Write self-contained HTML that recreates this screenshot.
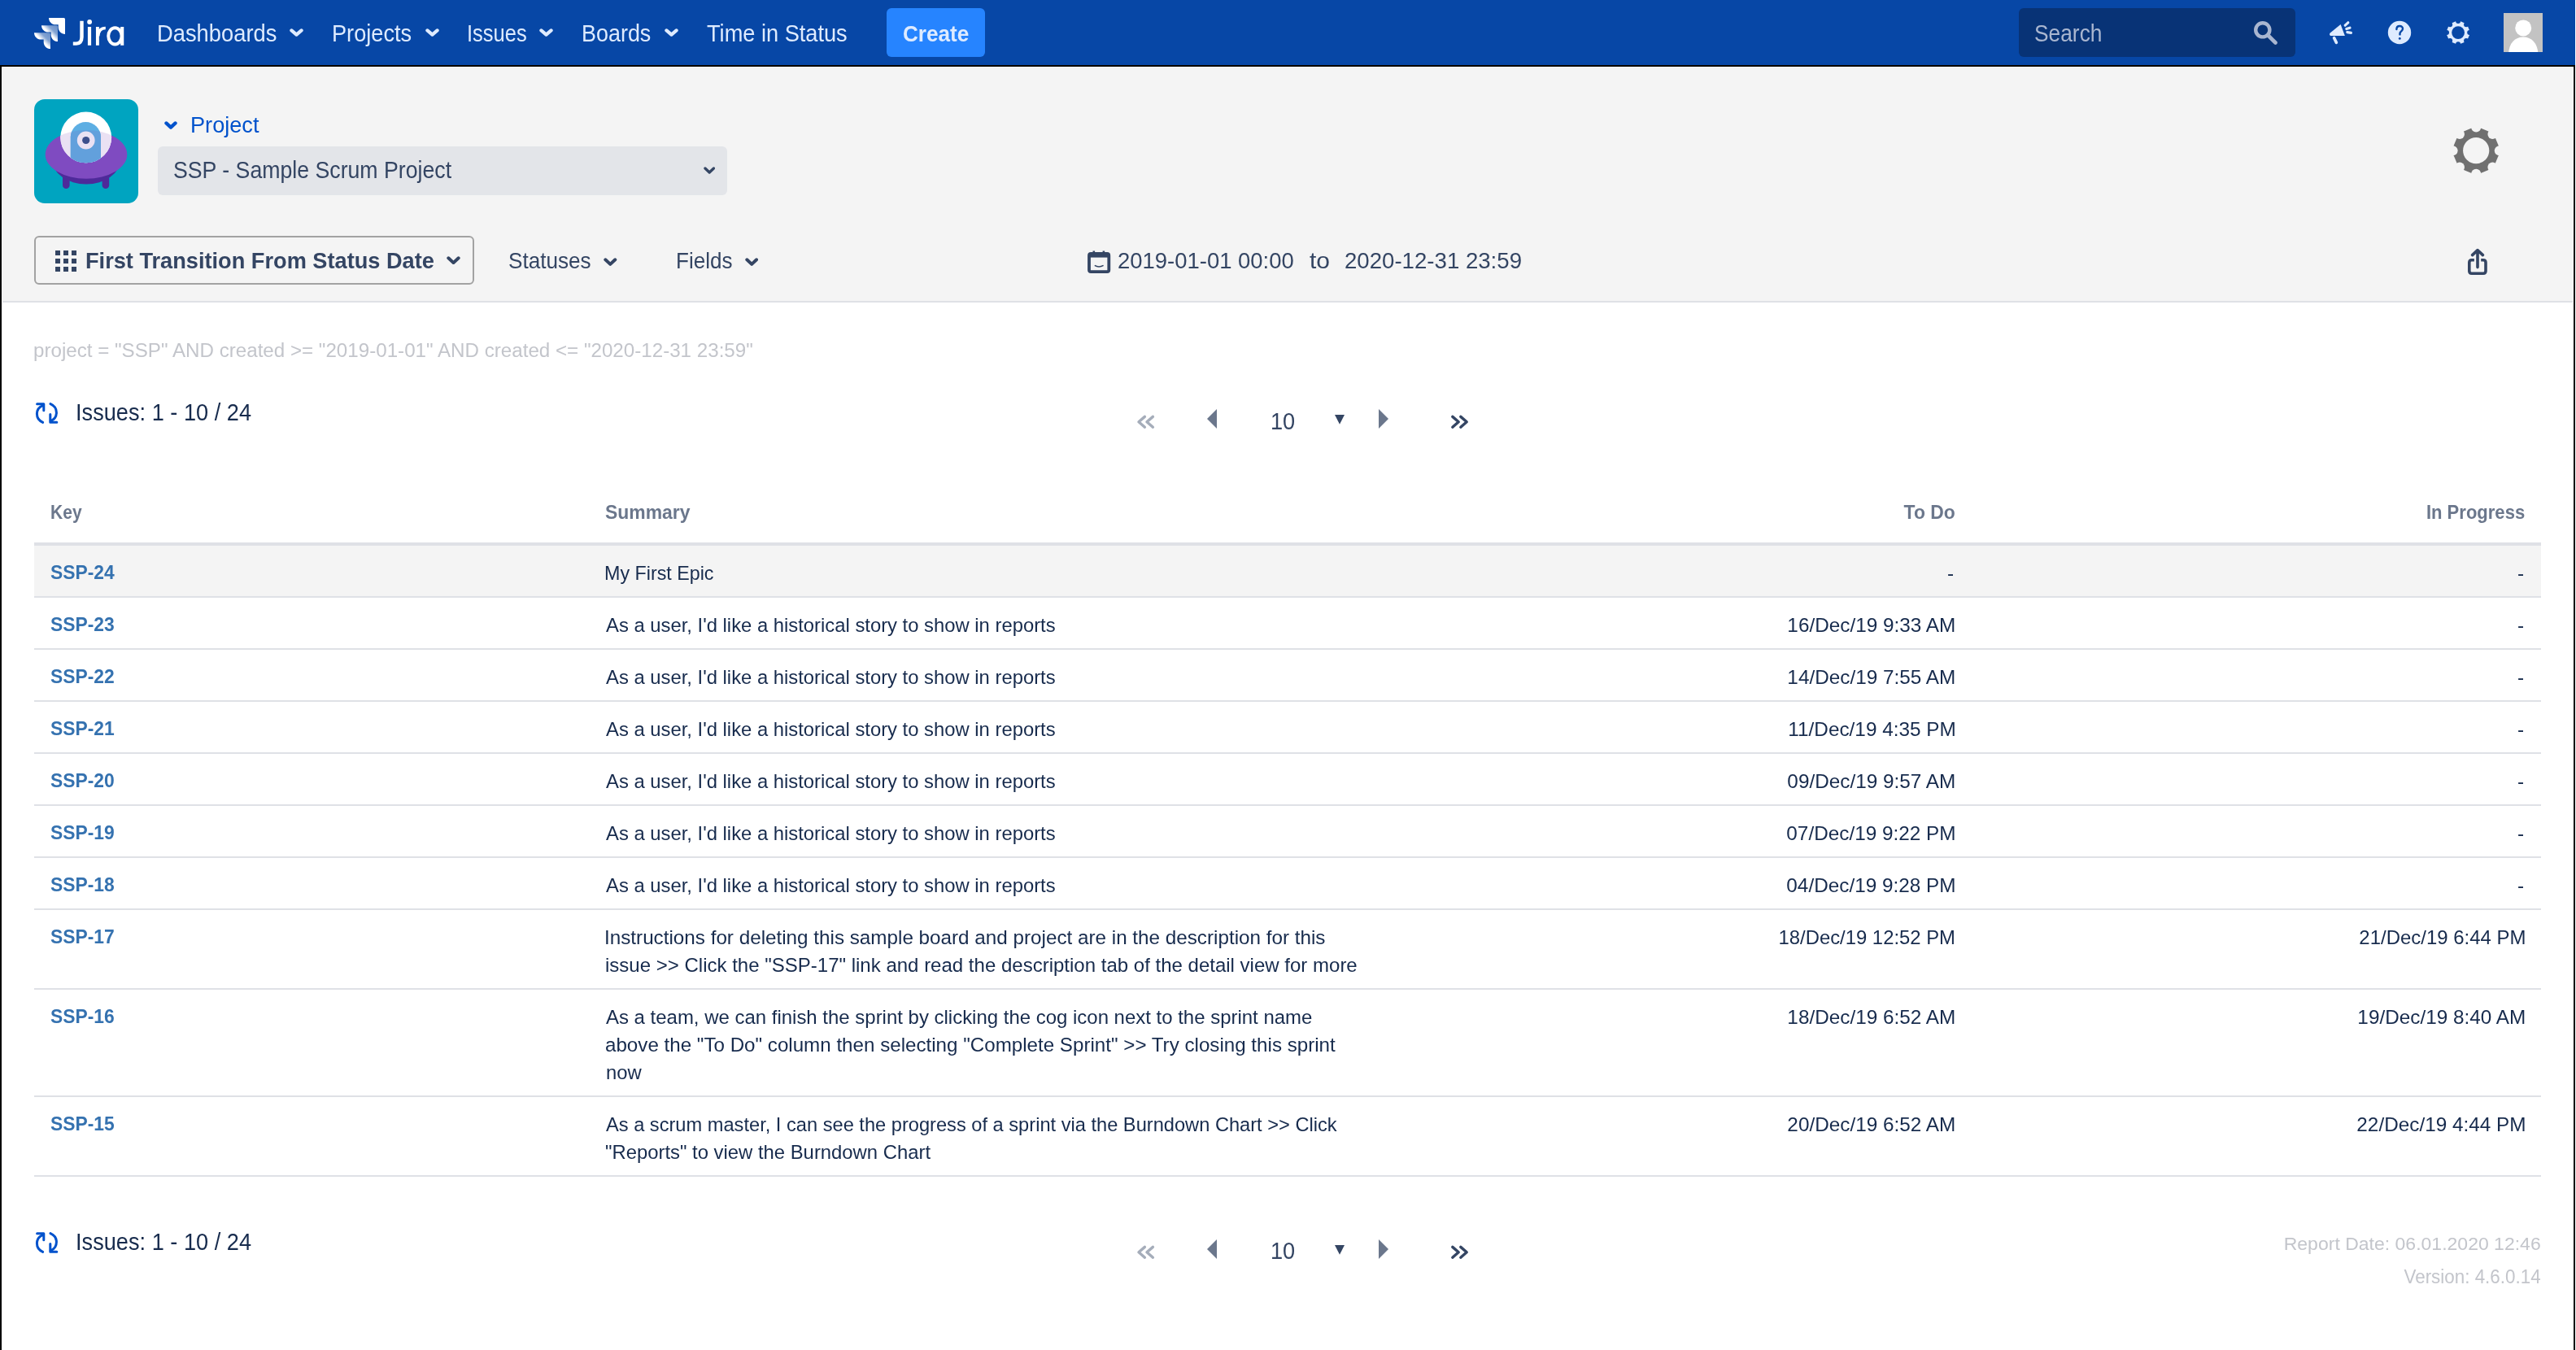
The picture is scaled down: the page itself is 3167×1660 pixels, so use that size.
<!DOCTYPE html>
<html><head><meta charset="utf-8"><title>Time in Status</title>
<style>
html,body{margin:0;padding:0;}
body{width:3167px;height:1660px;position:relative;overflow:hidden;background:#fff;font-family:"Liberation Sans", sans-serif;}
.t{position:absolute;white-space:pre;line-height:1;}
.a{position:absolute;display:block;}
.r{position:absolute;}
</style></head><body>
<div class="r" style="left:0;top:0;width:3166px;height:80px;background:#0747A6"></div><div class="r" style="left:0;top:80px;width:3166px;height:2px;background:#000"></div><div class="r" style="left:3px;top:83px;width:3160px;height:287px;background:#F4F4F4"></div><div class="r" style="left:3px;top:370px;width:3160px;height:2px;background:#DFE1E6"></div><div class="r" style="left:0;top:80px;width:2px;height:1580px;background:#000"></div><div class="r" style="left:3164px;top:80px;width:2px;height:1580px;background:#000"></div><svg class="a" style="left:41px;top:21px" width="40" height="40" viewBox="0 0 40 40">
<defs>
<linearGradient id="g1" x1="1" y1="0" x2="0" y2="1"><stop offset="0" stop-color="#fff" stop-opacity="0.38"/><stop offset="0.3" stop-color="#fff" stop-opacity="0.5"/><stop offset="0.5" stop-color="#fff"/><stop offset="1" stop-color="#fff"/></linearGradient>
</defs>
<path d="M38.6 1 H20.4 c0 4.6 3.7 8.3 8.3 8.3 h3.4 v3.3 c0 4.6 3.7 8.3 8.3 8.3 V2.6 c0-.9-.8-1.6-1.6-1.6z" fill="#fff" transform="translate(-1.4,0)"/>
<path d="M29.6 10.2 H11.4 c0 4.6 3.7 8.3 8.3 8.3 h3.4 v3.3 c0 4.6 3.7 8.3 8.3 8.3 V11.8 c0-.9-.8-1.6-1.6-1.6z" fill="url(#g1)" transform="translate(-1.4,0)"/>
<path d="M20.6 19.2 H2.4 c0 4.6 3.7 8.3 8.3 8.3 h3.4 v3.3 c0 4.6 3.7 8.3 8.3 8.3 V20.8 c0-.9-.8-1.6-1.6-1.6z" fill="url(#g1)" transform="translate(-1.4,0)"/>
</svg><svg class="a" style="left:86px;top:20px" width="70" height="40" viewBox="0 0 70 40">
<g fill="none" stroke="#fff">
<path d="M14.5 5.8 V25.8 C14.5 31 11.8 33.6 7.8 33.6 H3.8" stroke-width="4.4"/>
<path d="M24 13 V35.8" stroke-width="4.2"/>
<path d="M33.9 13 V35.8" stroke-width="3.9"/>
<path d="M34.6 24.5 C35 17.8 38.6 14.5 43.8 14.5" stroke-width="3.7"/>
<ellipse cx="55.4" cy="24.35" rx="8.2" ry="10.1" stroke-width="3.9"/>
<path d="M64.2 13 V35.8" stroke-width="4.1"/>
</g>
<circle cx="24.1" cy="7" r="2.9" fill="#fff"/>
</svg><div class="t" style="top:26.60px;font-size:29.0px;color:#DEEBFF;left:193.05px;transform-origin:0 0;transform:scaleX(0.9427);">Dashboards</div><svg class="a" style="left:356.4px;top:35px" width="17" height="10" viewBox="0 0 17 10"><path d="M2.4 2.4 L8.5 7.6000000000000005 L14.6 2.4" fill="none" stroke="#DEEBFF" stroke-width="4.2" stroke-linecap="round" stroke-linejoin="round"/></svg><div class="t" style="top:26.60px;font-size:29.0px;color:#DEEBFF;left:407.96px;transform-origin:0 0;transform:scaleX(0.9369);">Projects</div><svg class="a" style="left:522.6px;top:35px" width="17" height="10" viewBox="0 0 17 10"><path d="M2.4 2.4 L8.5 7.6000000000000005 L14.6 2.4" fill="none" stroke="#DEEBFF" stroke-width="4.2" stroke-linecap="round" stroke-linejoin="round"/></svg><div class="t" style="top:26.60px;font-size:29.0px;color:#DEEBFF;left:574.09px;transform-origin:0 0;transform:scaleX(0.8798);">Issues</div><svg class="a" style="left:663.4px;top:35px" width="17" height="10" viewBox="0 0 17 10"><path d="M2.4 2.4 L8.5 7.6000000000000005 L14.6 2.4" fill="none" stroke="#DEEBFF" stroke-width="4.2" stroke-linecap="round" stroke-linejoin="round"/></svg><div class="t" style="top:26.60px;font-size:29.0px;color:#DEEBFF;left:714.98px;transform-origin:0 0;transform:scaleX(0.9285);">Boards</div><svg class="a" style="left:816.6px;top:35px" width="17" height="10" viewBox="0 0 17 10"><path d="M2.4 2.4 L8.5 7.6000000000000005 L14.6 2.4" fill="none" stroke="#DEEBFF" stroke-width="4.2" stroke-linecap="round" stroke-linejoin="round"/></svg><div class="t" style="top:26.60px;font-size:29.0px;color:#DEEBFF;left:868.92px;transform-origin:0 0;transform:scaleX(0.9371);">Time in Status</div><div class="r" style="left:1090px;top:10px;width:121px;height:60px;background:#2684FF;border-radius:6px"></div><div class="t" style="top:27.53px;font-size:28.143px;color:#DEEBFF;font-weight:700;left:1110.05px;transform-origin:0 0;transform:scaleX(0.9279);">Create</div><div class="r" style="left:2482px;top:10px;width:340px;height:60px;background:#083376;border-radius:6px"></div><div class="t" style="top:27.00px;font-size:29.0px;color:#A9B6D0;left:2501.18px;transform-origin:0 0;transform:scaleX(0.9083);">Search</div><svg class="a" style="left:2770px;top:25px" width="32" height="32" viewBox="0 0 32 32"><circle cx="11.8" cy="11.8" r="8.6" fill="none" stroke="#A9B6D0" stroke-width="4.4"/><path d="M18.5 18.5 L27.5 27.5" stroke="#A9B6D0" stroke-width="4.6" stroke-linecap="round"/></svg><svg class="a" style="left:2860px;top:24px" width="36" height="34" viewBox="2860 24 36 34">
<path d="M2864.8 40.6 L2877.6 29.9 L2882.9 44 L2865.2 44.1 Q2863 42.4 2864.8 40.6z" fill="#DEEBFF"/>
<path d="M2869.6 46.6 L2872.4 52.4" stroke="#DEEBFF" stroke-width="3.6" stroke-linecap="round"/>
<g stroke="#DEEBFF" stroke-width="3.2" stroke-linecap="round">
<path d="M2883.2 31.2 L2886.8 27.8"/><path d="M2884.8 35.6 L2889 34.2"/><path d="M2885.8 39.6 L2890.4 40.4"/></g>
</svg><svg class="a" style="left:2934px;top:24px" width="32" height="32" viewBox="2934 24 32 32">
<circle cx="2950" cy="40.05" r="14.2" fill="#DEEBFF"/>
<path d="M2946.4 36 c0-2.5 1.7-4 3.8-4 c2.2 0 3.8 1.5 3.8 3.5 c0 2.6-3.5 3-3.5 5.6 v1.3" fill="none" stroke="#0747A6" stroke-width="2.4" stroke-linecap="round"/>
<circle cx="2950.3" cy="47.4" r="1.45" fill="#0747A6"/>
</svg><svg class="a" style="left:3005.9px;top:23.9px" width="32.2" height="32.2" viewBox="3005.9 23.9 32.2 32.2"><defs><mask id="mg1" maskUnits="userSpaceOnUse" x="3005.9" y="23.9" width="32.2" height="32.2"><rect x="3005.9" y="23.9" width="32.2" height="32.2" fill="#000"/><polygon points="3025.05,26.23 3029.58,28.11 3033.89,32.42 3035.77,36.95 3035.77,43.05 3033.89,47.58 3029.58,51.89 3025.05,53.77 3018.95,53.77 3014.42,51.89 3010.11,47.58 3008.23,43.05 3008.23,36.95 3010.11,32.42 3014.42,28.11 3018.95,26.23" fill="#fff"/><circle cx="3022.00" cy="25.90" r="3.0" fill="#000"/><circle cx="3031.97" cy="30.03" r="3.0" fill="#000"/><circle cx="3036.10" cy="40.00" r="3.0" fill="#000"/><circle cx="3031.97" cy="49.97" r="3.0" fill="#000"/><circle cx="3022.00" cy="54.10" r="3.0" fill="#000"/><circle cx="3012.03" cy="49.97" r="3.0" fill="#000"/><circle cx="3007.90" cy="40.00" r="3.0" fill="#000"/><circle cx="3012.03" cy="30.03" r="3.0" fill="#000"/><circle cx="3022" cy="40" r="7.9" fill="#000"/></mask></defs><rect x="3005.9" y="23.9" width="32.2" height="32.2" fill="#DEEBFF" mask="url(#mg1)"/></svg><svg class="a" style="left:3078px;top:16px" width="48" height="48" viewBox="0 0 48 48"><defs><filter id="avb" x="-0.2" y="-0.2" width="1.4" height="1.4"><feGaussianBlur stdDeviation="0.7"/></filter><clipPath id="avc"><rect width="48" height="48"/></clipPath></defs><rect width="48" height="48" fill="#C3C3C3"/><g clip-path="url(#avc)"><g filter="url(#avb)"><circle cx="24.2" cy="18.4" r="10" fill="#fff"/><path d="M6 50 C6.6 37 13.9 29.4 24.2 29.4 C34.4 29.4 41.8 37 42.4 50z" fill="#fff"/></g></g></svg><svg class="a" style="left:42px;top:122px" width="128" height="128" viewBox="0 0 128 128">
<rect width="128" height="128" rx="13" fill="#00A4C0"/>
<ellipse cx="64" cy="74" rx="42" ry="30.5" fill="#4E2A9A"/>
<rect x="35" y="88" width="8.6" height="22" rx="4.3" fill="#4E2A9A"/>
<rect x="83.6" y="88" width="8.6" height="22" rx="4.3" fill="#4E2A9A"/>
<ellipse cx="64" cy="67.9" rx="50.3" ry="29.9" fill="#7F4BC1"/>
<defs><clipPath id="dome"><circle cx="63.7" cy="46.9" r="31.4"/></clipPath></defs>
<g clip-path="url(#dome)">
<rect x="0" y="0" width="128" height="128" fill="#fff"/>
<ellipse cx="64" cy="67.9" rx="50.3" ry="29.9" fill="#EAE1F3"/>
<path d="M44.8 46.6 A18.6 18.6 0 0 1 82 46.6 V90 H44.8z" fill="#5DAEE3"/>
<path d="M44.8 90 V46.6 A18.6 18.6 0 0 1 82 46.6 V90z" fill="#62A0DC" clip-path="url(#lowerE)"/>
</g>
<defs><clipPath id="lowerE"><ellipse cx="64" cy="67.9" rx="50.3" ry="29.9"/></clipPath></defs>
<circle cx="63.7" cy="50.5" r="10.9" fill="#EAE1F3"/>
<circle cx="63.7" cy="50.5" r="4.6" fill="#3D4F8D"/>
</svg><svg class="a" style="left:202px;top:149px" width="16" height="10" viewBox="0 0 16 10"><path d="M2.4 2.4 L8.0 7.6000000000000005 L13.6 2.4" fill="none" stroke="#0052CC" stroke-width="4.2" stroke-linecap="round" stroke-linejoin="round"/></svg><div class="t" style="top:139.53px;font-size:28.143px;color:#0052CC;left:234.16px;transform-origin:0 0;transform:scaleX(0.9646);">Project</div><div class="r" style="left:194px;top:180px;width:700px;height:60px;background:#E3E5E9;border-radius:6px"></div><div class="t" style="top:194.71px;font-size:28.571px;color:#344563;left:212.67px;transform-origin:0 0;transform:scaleX(0.9342);">SSP - Sample Scrum Project</div><svg class="a" style="left:865px;top:205.3px" width="14.4" height="9" viewBox="0 0 14.4 9"><path d="M1.95 1.95 L7.2 7.05 L12.45 1.95" fill="none" stroke="#344563" stroke-width="3.3" stroke-linecap="round" stroke-linejoin="round"/></svg><svg class="a" style="left:3013.8px;top:154.8px" width="60.4" height="60.4" viewBox="3013.8 154.8 60.4 60.4"><defs><mask id="mg2" maskUnits="userSpaceOnUse" x="3013.8" y="154.8" width="60.4" height="60.4"><rect x="3013.8" y="154.8" width="60.4" height="60.4" fill="#000"/><polygon points="3050.10,157.47 3059.15,161.22 3067.78,169.85 3071.53,178.90 3071.53,191.10 3067.78,200.15 3059.15,208.78 3050.10,212.53 3037.90,212.53 3028.85,208.78 3020.22,200.15 3016.47,191.10 3016.47,178.90 3020.22,169.85 3028.85,161.22 3037.90,157.47" fill="#fff"/><circle cx="3044.00" cy="156.40" r="6.0" fill="#000"/><circle cx="3064.22" cy="164.78" r="6.0" fill="#000"/><circle cx="3072.60" cy="185.00" r="6.0" fill="#000"/><circle cx="3064.22" cy="205.22" r="6.0" fill="#000"/><circle cx="3044.00" cy="213.60" r="6.0" fill="#000"/><circle cx="3023.78" cy="205.22" r="6.0" fill="#000"/><circle cx="3015.40" cy="185.00" r="6.0" fill="#000"/><circle cx="3023.78" cy="164.78" r="6.0" fill="#000"/><circle cx="3044" cy="185" r="16.1" fill="#000"/></mask></defs><rect x="3013.8" y="154.8" width="60.4" height="60.4" fill="#707070" mask="url(#mg2)"/></svg><div class="r" style="left:42px;top:290px;width:537px;height:56px;border:2px solid #A2A2A2;border-radius:6px"></div><svg class="a" style="left:0;top:0" width="100" height="340" viewBox="0 0 100 340"><g fill="#344563"><rect x="68" y="308" width="6" height="6"/><rect x="68" y="318" width="6" height="6"/><rect x="68" y="328" width="6" height="6"/><rect x="78" y="308" width="6" height="6"/><rect x="78" y="318" width="6" height="6"/><rect x="78" y="328" width="6" height="6"/><rect x="88" y="308" width="6" height="6"/><rect x="88" y="318" width="6" height="6"/><rect x="88" y="328" width="6" height="6"/></g></svg><div class="t" style="top:306.16px;font-size:28.286px;color:#344563;font-weight:700;left:104.64px;transform-origin:0 0;transform:scaleX(0.9615);">First Transition From Status Date</div><svg class="a" style="left:549px;top:315px" width="17" height="10.4" viewBox="0 0 17 10.4"><path d="M2.3 2.3 L8.5 8.1 L14.7 2.3" fill="none" stroke="#344563" stroke-width="4" stroke-linecap="round" stroke-linejoin="round"/></svg><div class="t" style="top:306.16px;font-size:28.286px;color:#344563;left:624.69px;transform-origin:0 0;transform:scaleX(0.9243);">Statuses</div><svg class="a" style="left:742.2px;top:317px" width="16.6" height="10.2" viewBox="0 0 16.6 10.2"><path d="M2.3 2.3 L8.3 7.8999999999999995 L14.3 2.3" fill="none" stroke="#344563" stroke-width="4" stroke-linecap="round" stroke-linejoin="round"/></svg><div class="t" style="top:306.16px;font-size:28.286px;color:#344563;left:830.85px;transform-origin:0 0;transform:scaleX(0.9213);">Fields</div><svg class="a" style="left:916px;top:317px" width="16.4" height="10.2" viewBox="0 0 16.4 10.2"><path d="M2.3 2.3 L8.2 7.8999999999999995 L14.099999999999998 2.3" fill="none" stroke="#344563" stroke-width="4" stroke-linecap="round" stroke-linejoin="round"/></svg><svg class="a" style="left:1334px;top:305px" width="34" height="34" viewBox="1334 305 34 34">
<rect x="1339" y="312" width="24.3" height="22.2" rx="2.2" fill="none" stroke="#344563" stroke-width="3.8"/>
<rect x="1338" y="311" width="26" height="5.6" fill="#344563"/>
<path d="M1343.5 308.6 h2.6 v3 h-2.6z M1355.6 308.6 h2.6 v3 h-2.6z" fill="#344563"/>
<path d="M1345.8 326.4 Q1351 329.6 1356.6 326.4" fill="none" stroke="#344563" stroke-width="1.6"/>
</svg><div class="t" style="top:306.16px;font-size:28.286px;color:#344563;left:1374.33px;transform-origin:0 0;transform:scaleX(0.9714);">2019-01-01 00:00</div><div class="t" style="top:306.16px;font-size:28.286px;color:#344563;left:1610.00px;transform-origin:0 0;transform:scaleX(1.0606);">to</div><div class="t" style="top:306.16px;font-size:28.286px;color:#344563;left:1652.62px;transform-origin:0 0;transform:scaleX(0.9768);">2020-12-31 23:59</div><svg class="a" style="left:3030px;top:302px" width="32" height="40" viewBox="3030 302 32 40">
<path d="M3041.9 319.8 H3038.8 Q3035.8 319.8 3035.8 322.8 V333.2 Q3035.8 336.2 3038.8 336.2 H3053 Q3056 336.2 3056 333.2 V322.8 Q3056 319.8 3053 319.8 H3050.2" fill="none" stroke="#344563" stroke-width="3.6" stroke-linecap="butt"/>
<path d="M3046 328.6 V308.2 M3039.6 313.6 L3046 307.6 L3052.4 313.6" fill="none" stroke="#344563" stroke-width="3.6" stroke-linecap="round" stroke-linejoin="round"/>
</svg><div class="t" style="top:420.21px;font-size:23.571px;color:#C3C5CB;left:41.49px;transform-origin:0 0;transform:scaleX(1.0253);">project = &quot;SSP&quot; AND created &gt;= &quot;2019-01-01&quot; AND created &lt;= &quot;2020-12-31 23:59&quot;</div><svg class="a" style="left:35px;top:485.6px" width="40" height="40" viewBox="0 0 40 40">
<g fill="none" stroke="#0052CC" stroke-width="3" stroke-linecap="round" stroke-linejoin="round">
<path d="M17.6 12.6 C13.2 14.4 10.4 18.2 10.4 22.8 C10.4 27.4 13 31.4 17.6 33.4"/>
<path d="M10.6 10.8 H18.8 V18.8"/>
<path d="M27 10.6 C31.6 12.6 34.4 16.6 34.4 21.2 C34.4 25.8 31.8 29.8 27.4 31.6"/>
<path d="M26.8 23.6 V33.2 H34.8" />
</g></svg><div class="t" style="top:492.54px;font-size:28.714px;color:#172B4D;left:92.96px;transform-origin:0 0;transform:scaleX(0.9467);">Issues: 1 - 10 / 24</div><svg class="a" style="left:1380px;top:490px" width="440" height="50" viewBox="1380 490 440 50">
<g fill="none" stroke="#A5ADBA" stroke-width="3.4" stroke-linecap="round" stroke-linejoin="round"><path d="M1407.4 512.4 L1400 518.8 L1407.4 525.2 M1417.4 512.4 L1410 518.8 L1417.4 525.2"/></g>
<path d="M1496 503 V527 L1484 515z" fill="#6B778C"/>
<path d="M1641 510 H1653 L1647 521.8z" fill="#344563"/>
<path d="M1695 503 V527 L1707 515z" fill="#6B778C"/>
<g fill="none" stroke="#344563" stroke-width="3.4" stroke-linecap="round" stroke-linejoin="round"><path d="M1785.8 512.4 L1793.2 518.8 L1785.8 525.2 M1795.8 512.4 L1803.2 518.8 L1795.8 525.2"/></g>
</svg><div class="t" style="top:503.54px;font-size:28.714px;color:#344563;left:1561.76px;transform-origin:0 0;transform:scaleX(0.9473);">10</div><div class="t" style="top:617.61px;font-size:24.571px;color:#6B778C;font-weight:700;left:62.05px;transform-origin:0 0;transform:scaleX(0.8569);">Key</div><div class="t" style="top:617.61px;font-size:24.571px;color:#6B778C;font-weight:700;left:743.63px;transform-origin:0 0;transform:scaleX(0.9336);">Summary</div><div class="t" style="top:617.61px;font-size:24.571px;color:#6B778C;font-weight:700;right:763.53px;text-align:right;transform-origin:100% 0;transform:scaleX(0.9319);">To Do</div><div class="t" style="top:617.61px;font-size:24.571px;color:#6B778C;font-weight:700;right:63.01px;text-align:right;transform-origin:100% 0;transform:scaleX(0.8972);">In Progress</div><div class="r" style="left:42px;top:667px;width:3082px;height:4px;background:#DFE1E6"></div><div class="r" style="left:42px;top:671px;width:3082px;height:62px;background:#F4F4F4"></div><div class="r" style="left:42px;top:733px;width:3082px;height:2px;background:#DFE1E6"></div><div class="t" style="top:692.01px;font-size:24.571px;color:#3572B0;font-weight:700;left:61.93px;transform-origin:0 0;transform:scaleX(0.9292);">SSP-24</div><div class="t" style="top:692.53px;font-size:24.143px;color:#172B4D;left:743.35px;transform-origin:0 0;transform:scaleX(0.9649);">My First Epic</div><div class="t" style="top:693.33px;font-size:24.143px;color:#172B4D;right:764.84px;text-align:right;transform-origin:100% 0;transform:scaleX(1.008);">-</div><div class="t" style="top:693.33px;font-size:24.143px;color:#172B4D;right:64.04px;text-align:right;transform-origin:100% 0;transform:scaleX(1.008);">-</div><div class="r" style="left:42px;top:797px;width:3082px;height:2px;background:#DFE1E6"></div><div class="t" style="top:756.01px;font-size:24.571px;color:#3572B0;font-weight:700;left:61.93px;transform-origin:0 0;transform:scaleX(0.9292);">SSP-23</div><div class="t" style="top:756.53px;font-size:24.143px;color:#172B4D;left:745.00px;transform-origin:0 0;transform:scaleX(0.9873);">As a user, I&#x27;d like a historical story to show in reports</div><div class="t" style="top:756.53px;font-size:24.143px;color:#172B4D;right:762.44px;text-align:right;transform-origin:100% 0;transform:scaleX(1.008);">16/Dec/19 9:33 AM</div><div class="t" style="top:757.33px;font-size:24.143px;color:#172B4D;right:64.04px;text-align:right;transform-origin:100% 0;transform:scaleX(1.008);">-</div><div class="r" style="left:42px;top:861px;width:3082px;height:2px;background:#DFE1E6"></div><div class="t" style="top:820.01px;font-size:24.571px;color:#3572B0;font-weight:700;left:61.93px;transform-origin:0 0;transform:scaleX(0.9292);">SSP-22</div><div class="t" style="top:820.53px;font-size:24.143px;color:#172B4D;left:745.00px;transform-origin:0 0;transform:scaleX(0.9873);">As a user, I&#x27;d like a historical story to show in reports</div><div class="t" style="top:820.53px;font-size:24.143px;color:#172B4D;right:762.44px;text-align:right;transform-origin:100% 0;transform:scaleX(1.008);">14/Dec/19 7:55 AM</div><div class="t" style="top:821.33px;font-size:24.143px;color:#172B4D;right:64.04px;text-align:right;transform-origin:100% 0;transform:scaleX(1.008);">-</div><div class="r" style="left:42px;top:925px;width:3082px;height:2px;background:#DFE1E6"></div><div class="t" style="top:884.01px;font-size:24.571px;color:#3572B0;font-weight:700;left:61.93px;transform-origin:0 0;transform:scaleX(0.9292);">SSP-21</div><div class="t" style="top:884.53px;font-size:24.143px;color:#172B4D;left:745.00px;transform-origin:0 0;transform:scaleX(0.9873);">As a user, I&#x27;d like a historical story to show in reports</div><div class="t" style="top:884.53px;font-size:24.143px;color:#172B4D;right:762.44px;text-align:right;transform-origin:100% 0;transform:scaleX(1.008);">11/Dec/19 4:35 PM</div><div class="t" style="top:885.33px;font-size:24.143px;color:#172B4D;right:64.04px;text-align:right;transform-origin:100% 0;transform:scaleX(1.008);">-</div><div class="r" style="left:42px;top:989px;width:3082px;height:2px;background:#DFE1E6"></div><div class="t" style="top:948.01px;font-size:24.571px;color:#3572B0;font-weight:700;left:61.93px;transform-origin:0 0;transform:scaleX(0.9292);">SSP-20</div><div class="t" style="top:948.53px;font-size:24.143px;color:#172B4D;left:745.00px;transform-origin:0 0;transform:scaleX(0.9873);">As a user, I&#x27;d like a historical story to show in reports</div><div class="t" style="top:948.53px;font-size:24.143px;color:#172B4D;right:762.44px;text-align:right;transform-origin:100% 0;transform:scaleX(1.008);">09/Dec/19 9:57 AM</div><div class="t" style="top:949.33px;font-size:24.143px;color:#172B4D;right:64.04px;text-align:right;transform-origin:100% 0;transform:scaleX(1.008);">-</div><div class="r" style="left:42px;top:1053px;width:3082px;height:2px;background:#DFE1E6"></div><div class="t" style="top:1012.01px;font-size:24.571px;color:#3572B0;font-weight:700;left:61.93px;transform-origin:0 0;transform:scaleX(0.9292);">SSP-19</div><div class="t" style="top:1012.53px;font-size:24.143px;color:#172B4D;left:745.00px;transform-origin:0 0;transform:scaleX(0.9873);">As a user, I&#x27;d like a historical story to show in reports</div><div class="t" style="top:1012.53px;font-size:24.143px;color:#172B4D;right:762.44px;text-align:right;transform-origin:100% 0;transform:scaleX(1.008);">07/Dec/19 9:22 PM</div><div class="t" style="top:1013.33px;font-size:24.143px;color:#172B4D;right:64.04px;text-align:right;transform-origin:100% 0;transform:scaleX(1.008);">-</div><div class="r" style="left:42px;top:1117px;width:3082px;height:2px;background:#DFE1E6"></div><div class="t" style="top:1076.01px;font-size:24.571px;color:#3572B0;font-weight:700;left:61.93px;transform-origin:0 0;transform:scaleX(0.9292);">SSP-18</div><div class="t" style="top:1076.53px;font-size:24.143px;color:#172B4D;left:745.00px;transform-origin:0 0;transform:scaleX(0.9873);">As a user, I&#x27;d like a historical story to show in reports</div><div class="t" style="top:1076.53px;font-size:24.143px;color:#172B4D;right:762.44px;text-align:right;transform-origin:100% 0;transform:scaleX(1.008);">04/Dec/19 9:28 PM</div><div class="t" style="top:1077.33px;font-size:24.143px;color:#172B4D;right:64.04px;text-align:right;transform-origin:100% 0;transform:scaleX(1.008);">-</div><div class="r" style="left:42px;top:1215px;width:3082px;height:2px;background:#DFE1E6"></div><div class="t" style="top:1140.01px;font-size:24.571px;color:#3572B0;font-weight:700;left:61.93px;transform-origin:0 0;transform:scaleX(0.9292);">SSP-17</div><div class="t" style="top:1140.53px;font-size:24.143px;color:#172B4D;left:743.18px;transform-origin:0 0;transform:scaleX(1.0046);">Instructions for deleting this sample board and project are in the description for this</div><div class="t" style="top:1174.53px;font-size:24.143px;color:#172B4D;left:743.80px;transform-origin:0 0;transform:scaleX(0.9954);">issue &gt;&gt; Click the &quot;SSP-17&quot; link and read the description tab of the detail view for more</div><div class="t" style="top:1140.53px;font-size:24.143px;color:#172B4D;right:762.81px;text-align:right;transform-origin:100% 0;transform:scaleX(0.9885);">18/Dec/19 12:52 PM</div><div class="t" style="top:1140.53px;font-size:24.143px;color:#172B4D;right:61.55px;text-align:right;transform-origin:100% 0;transform:scaleX(0.9936);">21/Dec/19 6:44 PM</div><div class="r" style="left:42px;top:1347px;width:3082px;height:2px;background:#DFE1E6"></div><div class="t" style="top:1238.01px;font-size:24.571px;color:#3572B0;font-weight:700;left:61.93px;transform-origin:0 0;transform:scaleX(0.9292);">SSP-16</div><div class="t" style="top:1238.53px;font-size:24.143px;color:#172B4D;left:745.00px;transform-origin:0 0;transform:scaleX(0.9932);">As a team, we can finish the sprint by clicking the cog icon next to the sprint name</div><div class="t" style="top:1272.53px;font-size:24.143px;color:#172B4D;left:744.40px;transform-origin:0 0;transform:scaleX(1.0014);">above the &quot;To Do&quot; column then selecting &quot;Complete Sprint&quot; &gt;&gt; Try closing this sprint</div><div class="t" style="top:1306.53px;font-size:24.143px;color:#172B4D;left:745.00px;transform-origin:0 0;transform:scaleX(0.9873);">now</div><div class="t" style="top:1238.53px;font-size:24.143px;color:#172B4D;right:762.44px;text-align:right;transform-origin:100% 0;transform:scaleX(1.008);">18/Dec/19 6:52 AM</div><div class="t" style="top:1238.53px;font-size:24.143px;color:#172B4D;right:61.64px;text-align:right;transform-origin:100% 0;transform:scaleX(1.008);">19/Dec/19 8:40 AM</div><div class="r" style="left:42px;top:1445px;width:3082px;height:2px;background:#DFE1E6"></div><div class="t" style="top:1370.01px;font-size:24.571px;color:#3572B0;font-weight:700;left:61.93px;transform-origin:0 0;transform:scaleX(0.9292);">SSP-15</div><div class="t" style="top:1370.53px;font-size:24.143px;color:#172B4D;left:745.00px;transform-origin:0 0;transform:scaleX(0.9798);">As a scrum master, I can see the progress of a sprint via the Burndown Chart &gt;&gt; Click</div><div class="t" style="top:1404.53px;font-size:24.143px;color:#172B4D;left:744.40px;transform-origin:0 0;transform:scaleX(0.9886);">&quot;Reports&quot; to view the Burndown Chart</div><div class="t" style="top:1370.53px;font-size:24.143px;color:#172B4D;right:762.44px;text-align:right;transform-origin:100% 0;transform:scaleX(1.008);">20/Dec/19 6:52 AM</div><div class="t" style="top:1370.53px;font-size:24.143px;color:#172B4D;right:61.64px;text-align:right;transform-origin:100% 0;transform:scaleX(1.008);">22/Dec/19 4:44 PM</div><svg class="a" style="left:35px;top:1506.4px" width="40" height="40" viewBox="0 0 40 40">
<g fill="none" stroke="#0052CC" stroke-width="3" stroke-linecap="round" stroke-linejoin="round">
<path d="M17.6 12.6 C13.2 14.4 10.4 18.2 10.4 22.8 C10.4 27.4 13 31.4 17.6 33.4"/>
<path d="M10.6 10.8 H18.8 V18.8"/>
<path d="M27 10.6 C31.6 12.6 34.4 16.6 34.4 21.2 C34.4 25.8 31.8 29.8 27.4 31.6"/>
<path d="M26.8 23.6 V33.2 H34.8" />
</g></svg><div class="t" style="top:1513.34px;font-size:28.714px;color:#172B4D;left:92.96px;transform-origin:0 0;transform:scaleX(0.9467);">Issues: 1 - 10 / 24</div><svg class="a" style="left:1380px;top:1510.8px" width="440" height="50" viewBox="1380 490 440 50">
<g fill="none" stroke="#A5ADBA" stroke-width="3.4" stroke-linecap="round" stroke-linejoin="round"><path d="M1407.4 512.4 L1400 518.8 L1407.4 525.2 M1417.4 512.4 L1410 518.8 L1417.4 525.2"/></g>
<path d="M1496 503 V527 L1484 515z" fill="#6B778C"/>
<path d="M1641 510 H1653 L1647 521.8z" fill="#344563"/>
<path d="M1695 503 V527 L1707 515z" fill="#6B778C"/>
<g fill="none" stroke="#344563" stroke-width="3.4" stroke-linecap="round" stroke-linejoin="round"><path d="M1785.8 512.4 L1793.2 518.8 L1785.8 525.2 M1795.8 512.4 L1803.2 518.8 L1795.8 525.2"/></g>
</svg><div class="t" style="top:1524.34px;font-size:28.714px;color:#344563;left:1561.76px;transform-origin:0 0;transform:scaleX(0.9473);">10</div><div class="t" style="top:1518.47px;font-size:22.857px;color:#C3C5CB;right:43.65px;text-align:right;transform-origin:100% 0;transform:scaleX(1.0073);">Report Date: 06.01.2020 12:46</div><div class="t" style="top:1558.76px;font-size:23.286px;color:#C3C5CB;right:43.72px;text-align:right;transform-origin:100% 0;transform:scaleX(0.9629);">Version: 4.6.0.14</div></body></html>
